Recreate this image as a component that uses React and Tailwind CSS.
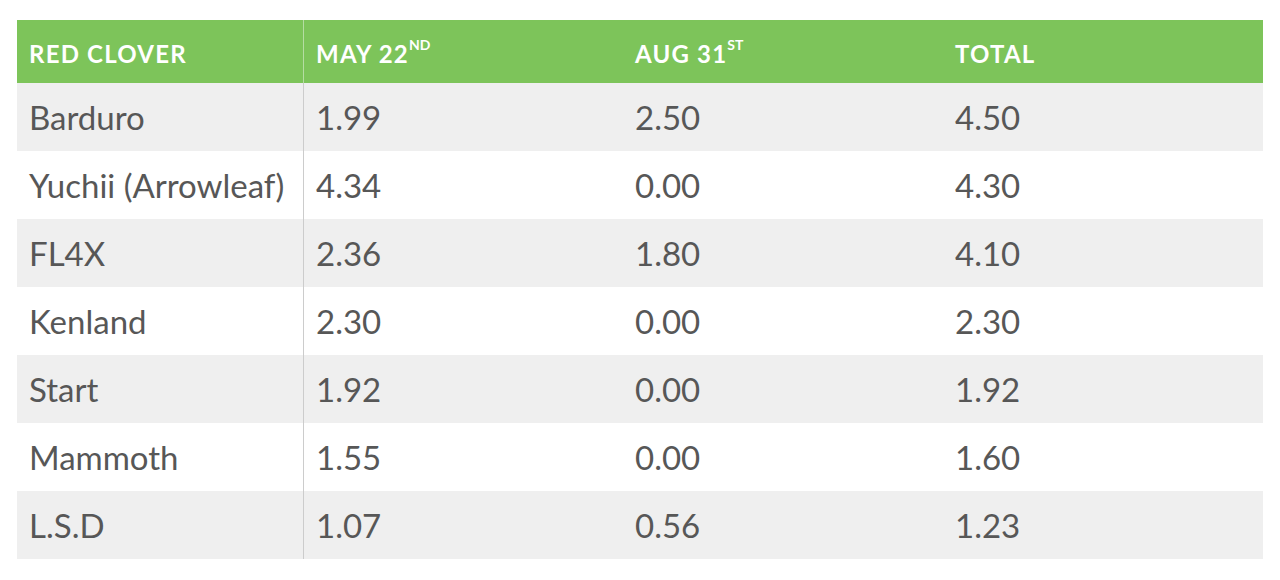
const rows = [
  ["Barduro", "1.99", "2.50", "4.50"],
  ["Yuchii (Arrowleaf)", "4.34", "0.00", "4.30"],
  ["FL4X", "2.36", "1.80", "4.10"],
  ["Kenland", "2.30", "0.00", "2.30"],
  ["Start", "1.92", "0.00", "1.92"],
  ["Mammoth", "1.55", "0.00", "1.60"],
  ["L.S.D", "1.07", "0.56", "1.23"],
];

export default function App() {
  return (
    <div className="w-[1280px] h-[580px] bg-white pt-5 pl-[17px]" style={{ fontFamily: "Lato, 'Noto Sans', sans-serif" }}>
      <div className="w-[1246px]">
        <div className="grid grid-cols-[287px_319px_320px_320px] h-[63px] bg-[#7dc45a] text-white font-bold text-[24px] tracking-[1.2px]">
          <div className="flex items-center pl-3 pt-1 border-r border-[#b5dda3]">RED CLOVER</div>
          <div className="flex items-center pl-3 pt-1">MAY 22<sup className="text-[14px] -top-[0.6em] tracking-normal">ND</sup></div>
          <div className="flex items-center pl-3 pt-1">AUG 31<sup className="text-[14px] -top-[0.6em] tracking-normal">ST</sup></div>
          <div className="flex items-center pl-3 pt-1">TOTAL</div>
        </div>
        {rows.map((r, i) => (
          <div key={i} className={`grid grid-cols-[287px_319px_320px_320px] h-[68px] text-[33px] text-[#575757] ${i % 2 === 0 ? "bg-[#efefef]" : "bg-white"}`}>
            <div className="flex items-center pl-3 pt-0.5 border-r border-[#cccccc]">{r[0]}</div>
            <div className="flex items-center pl-3 pt-0.5">{r[1]}</div>
            <div className="flex items-center pl-3 pt-0.5">{r[2]}</div>
            <div className="flex items-center pl-3 pt-0.5">{r[3]}</div>
          </div>
        ))}
      </div>
    </div>
  );
}
